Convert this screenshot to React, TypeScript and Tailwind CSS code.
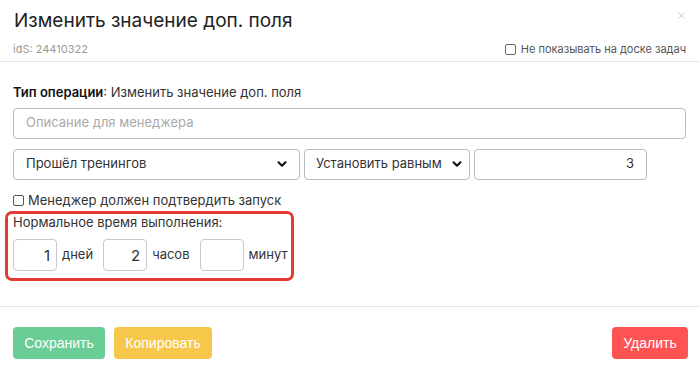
import { X, ChevronDown } from 'lucide-react';

const font = { fontFamily: 'Inter, "Noto Sans", sans-serif' };

function TimeBox({ value, unit }: { value: string; unit: string }) {
  return (
    <div className="flex items-center">
      <input
        readOnly
        value={value}
        className="w-[44px] h-[32px] border border-[#c8c8d0] rounded-[4px] px-[6px] text-right text-[15px] text-[#333] outline-none"
      />
      <span className="ml-[5px] text-[13px] text-[#333]">{unit}</span>
    </div>
  );
}

function Select({ label, className }: { label: string; className: string }) {
  return (
    <div
      className={`h-[31px] flex items-center justify-between border border-[#b9b9c3] rounded-[4px] text-[13px] text-[#333] ${className}`}
    >
      <span className="whitespace-nowrap">{label}</span>
      <ChevronDown size={14} strokeWidth={3.5} className="text-[#111] shrink-0" />
    </div>
  );
}

export default function App() {
  return (
    <div className="w-[699px] h-[371px] bg-white relative" style={font}>
      {/* Заголовок */}
      <div className="px-[13px] pt-[7px] pb-[3px] border-b border-[#e3e3e3]">
        <div className="flex justify-between items-start">
          <h1 className="text-[19px] leading-[28px] text-[#222] ml-[1px]">Изменить значение доп. поля</h1>
          <X size={11} strokeWidth={1.5} className="text-[#aaa] mt-[3px] mr-[-1px]" />
        </div>
        <div className="flex justify-between items-center mt-[6px]">
          <span className="text-[11px] text-[#999]">idS: 24410322</span>
          <label className="flex items-center gap-[5px] text-[11px] text-[#555]">
            <span className="w-[11px] h-[11px] border border-[#666] rounded-[2px]" />
            Не показывать на доске задач
          </label>
        </div>
      </div>

      {/* Тело */}
      <div className="px-[13px] pt-[21px] pb-[25px] border-b border-[#e3e3e3]">
        <div className="text-[13px] text-[#333] leading-[18px]">
          <span className="font-semibold text-[#111]">Тип операции</span>: Изменить значение доп. поля
        </div>
        <div className="mt-[7px] h-[31px] flex items-center border border-[#b9b9c3] rounded-[4px] px-[12px] text-[13px] text-[#aaa]">
          Описание для менеджера
        </div>
        <div className="mt-[10px] flex gap-[4px]">
          <Select label="Прошёл тренингов" className="w-[287px] pl-[12px] pr-[10px]" />
          <Select label="Установить равным" className="w-[166px] pl-[11px] pr-[5px]" />
          <div className="w-[173px] h-[31px] flex items-center justify-end border border-[#b9b9c3] rounded-[4px] px-[12px] text-[13px] text-[#333]">
            3
          </div>
        </div>
        <label className="mt-[11px] flex items-center gap-[4px] text-[13px] text-[#333]">
          <span className="w-[11px] h-[11px] border border-[#555] rounded-[2px]" />
          Менеджер должен подтвердить запуск
        </label>
        <div className="mt-[1px] ml-[-8px] w-[289px] border-[3px] border-[#e53a33] rounded-[7px] pl-[5px] pb-[7px]">
          <div className="text-[13px] text-[#333] leading-[16px]">Нормальное время выполнения:</div>
          <div className="mt-[9px] flex gap-[10px]">
            <TimeBox value="1" unit="дней" />
            <TimeBox value="2" unit="часов" />
            <TimeBox value="" unit="минут" />
          </div>
        </div>
      </div>

      {/* Кнопки */}
      <div className="px-[13px] pt-[20px] flex" style={{ fontFamily: '"Liberation Sans", Arial, sans-serif' }}>
        <button className="h-[32px] w-[92px] bg-[#6acd96] text-white text-[14px] rounded-[4px]">Сохранить</button>
        <button className="ml-[9px] h-[32px] w-[98px] bg-[#f7c74b] text-white text-[14px] rounded-[4px]">Копировать</button>
        <button className="ml-auto mr-[-2px] h-[32px] w-[76px] bg-[#fd5353] text-white text-[14px] rounded-[4px]">Удалить</button>
      </div>
    </div>
  );
}
